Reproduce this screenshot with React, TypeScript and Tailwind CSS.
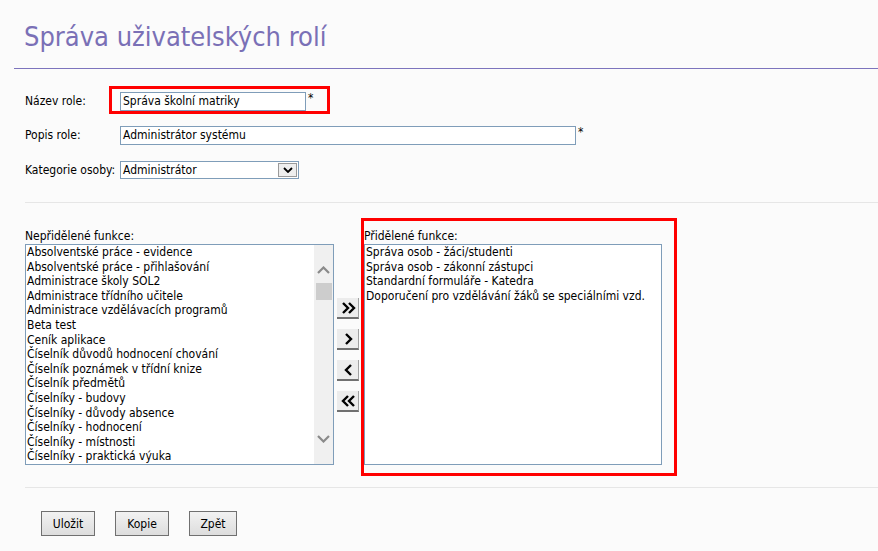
import React from "react";

const unassigned = [
  "Absolventské práce - evidence",
  "Absolventské práce - přihlašování",
  "Administrace školy SOL2",
  "Administrace třídního učitele",
  "Administrace vzdělávacích programů",
  "Beta test",
  "Ceník aplikace",
  "Číselník důvodů hodnocení chování",
  "Číselník poznámek v třídní knize",
  "Číselník předmětů",
  "Číselníky - budovy",
  "Číselníky - důvody absence",
  "Číselníky - hodnocení",
  "Číselníky - místnosti",
  "Číselníky - praktická výuka",
];

const assigned = [
  "Správa osob - žáci/studenti",
  "Správa osob - zákonní zástupci",
  "Standardní formuláře - Katedra",
  "Doporučení pro vzdělávání žáků se speciálními vzd.",
];

const Chevron = ({ dir, double }: { dir: "left" | "right"; double?: boolean }) => {
  const one = dir === "right" ? "M0 0 L5 5 L0 10" : "M5 0 L0 5 L5 10";
  return (
    <svg width="16" height="12" viewBox="-1 -1 16 12" fill="none">
      {double ? (
        <>
          <path d={one} transform="translate(2,0)" stroke="#000" strokeWidth="2.4" />
          <path d={one} transform="translate(8,0)" stroke="#000" strokeWidth="2.4" />
        </>
      ) : (
        <path d={one} transform="translate(5,0)" stroke="#000" strokeWidth="2.4" />
      )}
    </svg>
  );
};

const MoveButton = ({ children }: { children: React.ReactNode }) => (
  <button className="flex h-[21px] w-[22px] items-center justify-center border-b-2 border-r border-b-[#707070] border-r-[#a0a0a0] bg-[#ececec]">
    {children}
  </button>
);

const ActionButton = ({ label, width }: { label: string; width: string }) => (
  <button
    className={`h-[25px] ${width} border border-[#707070] bg-linear-to-b from-[#f2f2f2] to-[#dddddd] text-[12px] text-black`}
  >
    {label}
  </button>
);

export default function App() {
  return (
    <div className="relative min-h-[551px] bg-[#fbfbfb] font-['DejaVu_Sans_Condensed','DejaVu_Sans',sans-serif] text-[12px] text-black">
      <h1 className="h-[68px] pl-[24px] pt-[20px] text-[27px] leading-[33px] text-[#7a70b6]">
        Správa uživatelských rolí
      </h1>
      <div className="ml-[14px] border-t border-[#7d74bd]" />

      <div className="pl-[25px]">
        <div className="mt-[23px] flex items-start">
          <label className="w-[95px] leading-[19px]">Název role:</label>
          <div className="h-[19px] w-[186px] border border-[#7f9db9] bg-white px-[2px] leading-[17px]">
            Správa školní matriky
          </div>
          <span className="ml-[2px] leading-[12px]">*</span>
        </div>

        <div className="mt-[15px] flex items-start">
          <label className="w-[95px] leading-[19px]">Popis role:</label>
          <div className="h-[19px] w-[456px] border border-[#7f9db9] bg-white px-[2px] leading-[17px]">
            Administrátor systému
          </div>
          <span className="ml-[2px] leading-[12px]">*</span>
        </div>

        <div className="mt-[16px] flex items-start">
          <label className="w-[95px] leading-[19px]">Kategorie osoby:</label>
          <div className="flex h-[18px] w-[179px] items-stretch border border-[#7f9db9] bg-white">
            <span className="flex-1 px-[2px] leading-[16px]">Administrátor</span>
            <span className="m-px flex w-[19px] items-center justify-center border border-[#9a9a9a] bg-[#eeeeee]">
              <svg width="10" height="6" viewBox="0 0 10 6" fill="none">
                <path d="M1 1 L5 5 L9 1" stroke="#000" strokeWidth="1.8" />
              </svg>
            </span>
          </div>
        </div>

        <div className="mt-[22px] border-t border-[#e6e6e6]" />

        <div className="mt-[26px] flex items-start">
          <div className="flex flex-col">
            <span className="h-[15px] leading-[14px]">Nepřidělené funkce:</span>
            <div className="flex h-[221px] w-[309px] border border-[#7f9db9] bg-white">
              <ul className="flex-1 overflow-hidden pl-[1px] leading-[14.6px]">
                {unassigned.map((f) => (
                  <li key={f} className="whitespace-nowrap">
                    {f}
                  </li>
                ))}
              </ul>
              <div className="flex w-[19px] flex-col items-center bg-[#f0f0f0]">
                <svg className="mt-[21px]" width="13" height="8" viewBox="0 0 13 8" fill="none">
                  <path d="M1 7 L6.5 1.5 L12 7" stroke="#8a8a8a" strokeWidth="2.2" />
                </svg>
                <div className="mt-[9px] h-[17px] w-[16px] bg-[#cdcdcd]" />
                <div className="flex-1" />
                <svg className="mb-[21px]" width="13" height="8" viewBox="0 0 13 8" fill="none">
                  <path d="M1 1 L6.5 6.5 L12 1" stroke="#8a8a8a" strokeWidth="2.2" />
                </svg>
              </div>
            </div>
          </div>

          <div className="ml-[3px] mt-[69px] flex flex-col gap-[10px]">
            <MoveButton>
              <Chevron dir="right" double />
            </MoveButton>
            <MoveButton>
              <Chevron dir="right" />
            </MoveButton>
            <MoveButton>
              <Chevron dir="left" />
            </MoveButton>
            <MoveButton>
              <Chevron dir="left" double />
            </MoveButton>
          </div>

          <div className="ml-[5px] flex flex-col">
            <span className="h-[15px] leading-[14px]">Přidělené funkce:</span>
            <ul className="h-[221px] w-[298px] overflow-hidden border border-[#7f9db9] bg-white pl-[1px] leading-[14.6px]">
              {assigned.map((f) => (
                <li key={f} className="whitespace-nowrap">
                  {f}
                </li>
              ))}
            </ul>
          </div>
        </div>

        <div className="mt-[22px] border-t border-[#e6e6e6]" />

        <div className="mt-[23px] flex gap-[20px] pl-[16px]">
          <ActionButton label="Uložit" width="w-[54px]" />
          <ActionButton label="Kopie" width="w-[54px]" />
          <ActionButton label="Zpět" width="w-[48px]" />
        </div>
      </div>

      <div className="pointer-events-none absolute left-[109px] top-[86px] h-[28px] w-[221px] border-[3px] border-[#ff0000]" />
      <div className="pointer-events-none absolute left-[361px] top-[218px] h-[258px] w-[316px] border-[3px] border-[#ff0000]" />
    </div>
  );
}
